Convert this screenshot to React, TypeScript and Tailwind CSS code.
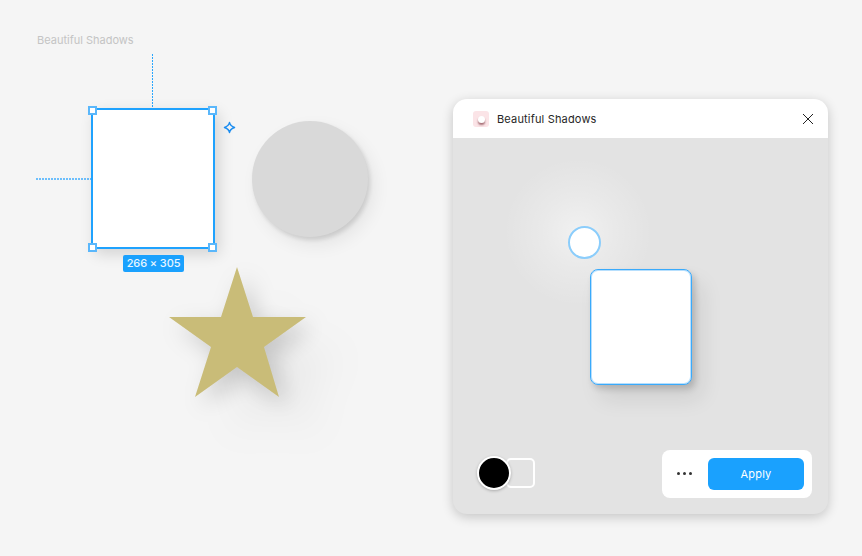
import React from 'react';

function Handle({ className }: { className: string }) {
  return <div className={`absolute w-[9px] h-[9px] bg-white border-2 border-[#5ab7fb] ${className}`} />;
}

function SparkIcon() {
  return (
    <svg className="absolute left-[223px] top-[121px]" width="13" height="13" viewBox="0 0 13 13" fill="none">
      <path d="M6.5 1.5 C6.9 3.9 8 5.2 11.5 6.5 C8 7.8 6.9 9.1 6.5 11.5 C6.1 9.1 5 7.8 1.5 6.5 C5 5.2 6.1 3.9 6.5 1.5Z" stroke="#1a8cf0" strokeWidth="1.5" strokeLinejoin="round" />
    </svg>
  );
}

function Canvas() {
  return (
    <>
      <div className="absolute left-[37px] top-[34px] text-[11px] leading-[13px] text-[#c4c4c4]">Beautiful Shadows</div>

      {/* measure guides */}
      <div className="absolute left-[152px] top-[54px] w-px h-[55px] bg-[repeating-linear-gradient(to_bottom,#2aa6fd_0px,#2aa6fd_2px,transparent_2px,transparent_3px)]" />
      <div className="absolute left-[36px] top-[178px] w-[55px] h-[2px] bg-[repeating-linear-gradient(to_right,#6dbffc_0px,#6dbffc_2px,transparent_2px,transparent_3px)]" />

      {/* selected frame */}
      <div className="absolute left-[91px] top-[108px] w-[124px] h-[141px] bg-white border-2 border-[#1fa2fe] shadow-[4px_5px_14px_rgba(0,0,0,0.14)]">
        <Handle className="-left-[5px] -top-[4px]" />
        <Handle className="-right-[4px] -top-[4px]" />
        <Handle className="-left-[5px] -bottom-[5px]" />
        <Handle className="-right-[4px] -bottom-[5px]" />
      </div>
      <SparkIcon />
      <div className="absolute left-[123px] top-[255px] w-[61px] h-[17px] rounded-[2px] bg-[#1aa1fe] text-white/90 text-[11px] font-medium tracking-[-0.1px] leading-[17px] text-center">
        266 × 305
      </div>

      <div className="absolute left-[252px] top-[121px] w-[116px] h-[116px] rounded-full bg-[#d9d9d9] shadow-[2px_3px_4px_rgba(0,0,0,0.12),6px_8px_18px_rgba(0,0,0,0.07)]" />

      <svg
        className="absolute left-[150px] top-[250px] [filter:drop-shadow(8px_9px_11px_rgba(0,0,0,0.17))_drop-shadow(36px_36px_20px_rgba(0,0,0,0.05))] overflow-visible"
        width="180"
        height="170"
        viewBox="150 250 180 170"
      >
        <path d="M237 267 L253 317 L306 317 L264 347 L279 397 L237 367 L195 397 L211 347 L169 317 L221 317 Z" fill="#c9bc78" />
      </svg>
    </>
  );
}

function PluginWindow() {
  return (
    <div className="absolute left-[453px] top-[99px] w-[375px] h-[415px] rounded-[14px] overflow-hidden flex flex-col bg-[#e3e3e3] shadow-[0_3px_12px_rgba(0,0,0,0.2)]">
      <div className="h-[39px] bg-white flex items-center pl-5 pr-[15px] shrink-0">
        <div className="w-4 h-4 rounded-[3px] bg-[#fbe4e7] flex items-center justify-center">
          <div className="w-[7px] h-[7px] mt-[1px] rounded-full bg-white shadow-[0_2px_2px_rgba(130,60,70,0.7)]" />
        </div>
        <span className="ml-2 mt-[1px] text-[11px] font-normal tracking-[0.17px] text-[#262626]">Beautiful Shadows</span>
        <svg className="ml-auto" width="10" height="10" viewBox="0 0 10 10" fill="none">
          <path d="M0 0 L10 10 M10 0 L0 10" stroke="#222" strokeWidth="1" />
        </svg>
      </div>

      <div className="relative flex-1 flex items-end justify-between pl-6 pr-4 pb-4">
        <div className="absolute left-[50px] top-[19px] w-[150px] h-[150px] rounded-full bg-[radial-gradient(circle,rgba(255,255,255,0.5)_0%,rgba(255,255,255,0.22)_35%,rgba(255,255,255,0)_70%)]" />
        <div className="absolute left-[115px] top-[88px] w-[33px] h-[33px] rounded-full bg-white border-2 border-[#8bcdfb]" />
        <div className="absolute left-[137px] top-[131px] w-[102px] h-[116px] rounded-[8px] bg-white border border-[#3aaafb] shadow-[inset_0_0_0_1px_rgba(74,176,251,0.4),3px_4px_6px_rgba(0,0,0,0.16),10px_14px_22px_rgba(0,0,0,0.09)]" />

        <div className="relative flex items-center mb-2">
          <div className="relative z-10 w-[34px] h-[34px] rounded-full bg-black border-2 border-white shadow-[0_1px_3px_rgba(0,0,0,0.25)]" />
          <div className="-ml-[5px] w-[29px] h-[30px] rounded-[5px] border-2 border-white" />
        </div>

        <div className="relative w-[150px] h-12 rounded-[8px] bg-white flex items-center pl-[15px] pr-2 justify-between">
          <div className="flex gap-[3px] mb-[2px]">
            <div className="w-[3px] h-[3px] rounded-full bg-[#333]" />
            <div className="w-[3px] h-[3px] rounded-full bg-[#333]" />
            <div className="w-[3px] h-[3px] rounded-full bg-[#333]" />
          </div>
          <button className="w-24 h-8 rounded-[6px] bg-[#1aa1fe] text-white text-[11px] font-normal tracking-[0.2px]">Apply</button>
        </div>
      </div>
    </div>
  );
}

export default function App() {
  return (
    <div className="relative w-[862px] h-[556px] overflow-hidden bg-[#f5f5f5] font-['Inter',sans-serif]">
      <Canvas />
      <PluginWindow />
    </div>
  );
}
